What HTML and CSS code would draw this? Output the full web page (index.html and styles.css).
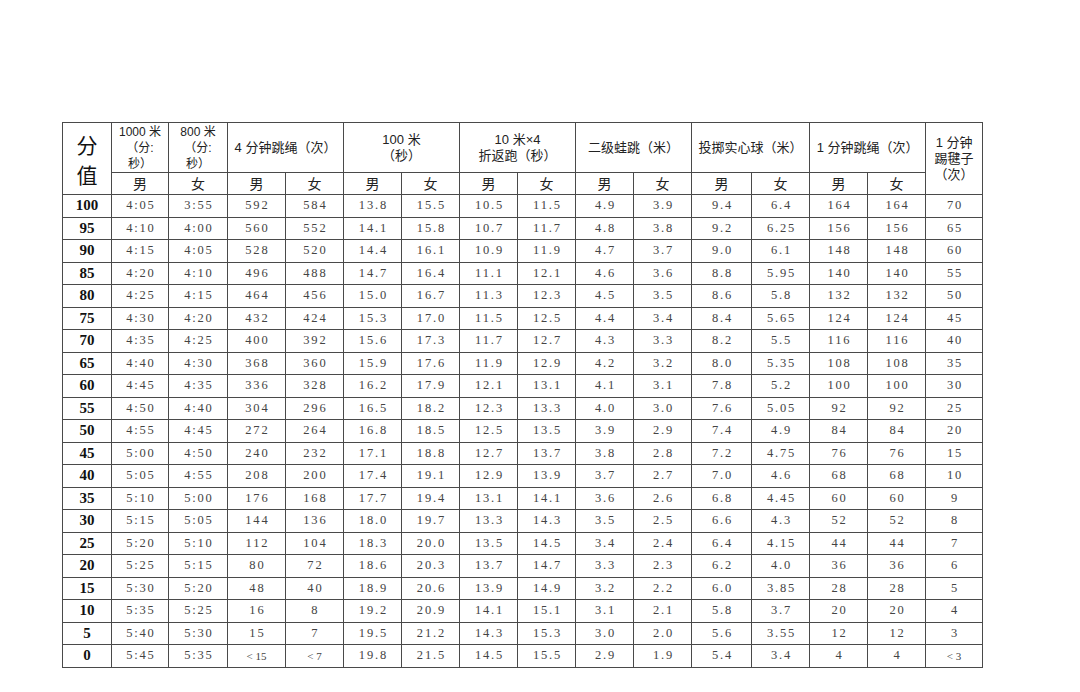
FILE: index.html
```html
<!DOCTYPE html>
<html lang="zh">
<head>
<meta charset="utf-8">
<link rel="stylesheet" href="styles.css">
</head>
<body>
<div class="page">
<table class="score">
<colgroup>
<col class="c-s"><col class="c-a"><col class="c-b">
<col class="c"><col class="c"><col class="c"><col class="c"><col class="c"><col class="c"><col class="c"><col class="c"><col class="c-w"><col class="c"><col class="c"><col class="c"><col class="c-e">
</colgroup>
<thead>
<tr class="h1">
<th rowspan="2" class="big">分<br>值</th>
<th class="small">1000 米<br>（分:<br>秒）</th>
<th class="small">800 米<br>（分:<br>秒）</th>
<th colspan="2">4 分钟跳绳（次）</th>
<th colspan="2">100 米<br>（秒）</th>
<th colspan="2">10 米×4<br>折返跑（秒）</th>
<th colspan="2">二级蛙跳（米）</th>
<th colspan="2">投掷实心球（米）</th>
<th colspan="2">1 分钟跳绳（次）</th>
<th rowspan="2" class="last">1 分钟<br>踢毽子<br>（次）</th>
</tr>
<tr class="h2">
<th>男</th><th>女</th><th>男</th><th>女</th><th>男</th><th>女</th><th>男</th><th>女</th><th>男</th><th>女</th><th>男</th><th>女</th><th>男</th><th>女</th>
</tr>
</thead>
<tbody>
<tr><th>100</th><td>4:05</td><td>3:55</td><td>592</td><td>584</td><td>13.8</td><td>15.5</td><td>10.5</td><td>11.5</td><td>4.9</td><td>3.9</td><td>9.4</td><td>6.4</td><td>164</td><td>164</td><td>70</td></tr>
<tr><th>95</th><td>4:10</td><td>4:00</td><td>560</td><td>552</td><td>14.1</td><td>15.8</td><td>10.7</td><td>11.7</td><td>4.8</td><td>3.8</td><td>9.2</td><td>6.25</td><td>156</td><td>156</td><td>65</td></tr>
<tr><th>90</th><td>4:15</td><td>4:05</td><td>528</td><td>520</td><td>14.4</td><td>16.1</td><td>10.9</td><td>11.9</td><td>4.7</td><td>3.7</td><td>9.0</td><td>6.1</td><td>148</td><td>148</td><td>60</td></tr>
<tr><th>85</th><td>4:20</td><td>4:10</td><td>496</td><td>488</td><td>14.7</td><td>16.4</td><td>11.1</td><td>12.1</td><td>4.6</td><td>3.6</td><td>8.8</td><td>5.95</td><td>140</td><td>140</td><td>55</td></tr>
<tr><th>80</th><td>4:25</td><td>4:15</td><td>464</td><td>456</td><td>15.0</td><td>16.7</td><td>11.3</td><td>12.3</td><td>4.5</td><td>3.5</td><td>8.6</td><td>5.8</td><td>132</td><td>132</td><td>50</td></tr>
<tr><th>75</th><td>4:30</td><td>4:20</td><td>432</td><td>424</td><td>15.3</td><td>17.0</td><td>11.5</td><td>12.5</td><td>4.4</td><td>3.4</td><td>8.4</td><td>5.65</td><td>124</td><td>124</td><td>45</td></tr>
<tr><th>70</th><td>4:35</td><td>4:25</td><td>400</td><td>392</td><td>15.6</td><td>17.3</td><td>11.7</td><td>12.7</td><td>4.3</td><td>3.3</td><td>8.2</td><td>5.5</td><td>116</td><td>116</td><td>40</td></tr>
<tr><th>65</th><td>4:40</td><td>4:30</td><td>368</td><td>360</td><td>15.9</td><td>17.6</td><td>11.9</td><td>12.9</td><td>4.2</td><td>3.2</td><td>8.0</td><td>5.35</td><td>108</td><td>108</td><td>35</td></tr>
<tr><th>60</th><td>4:45</td><td>4:35</td><td>336</td><td>328</td><td>16.2</td><td>17.9</td><td>12.1</td><td>13.1</td><td>4.1</td><td>3.1</td><td>7.8</td><td>5.2</td><td>100</td><td>100</td><td>30</td></tr>
<tr><th>55</th><td>4:50</td><td>4:40</td><td>304</td><td>296</td><td>16.5</td><td>18.2</td><td>12.3</td><td>13.3</td><td>4.0</td><td>3.0</td><td>7.6</td><td>5.05</td><td>92</td><td>92</td><td>25</td></tr>
<tr><th>50</th><td>4:55</td><td>4:45</td><td>272</td><td>264</td><td>16.8</td><td>18.5</td><td>12.5</td><td>13.5</td><td>3.9</td><td>2.9</td><td>7.4</td><td>4.9</td><td>84</td><td>84</td><td>20</td></tr>
<tr><th>45</th><td>5:00</td><td>4:50</td><td>240</td><td>232</td><td>17.1</td><td>18.8</td><td>12.7</td><td>13.7</td><td>3.8</td><td>2.8</td><td>7.2</td><td>4.75</td><td>76</td><td>76</td><td>15</td></tr>
<tr><th>40</th><td>5:05</td><td>4:55</td><td>208</td><td>200</td><td>17.4</td><td>19.1</td><td>12.9</td><td>13.9</td><td>3.7</td><td>2.7</td><td>7.0</td><td>4.6</td><td>68</td><td>68</td><td>10</td></tr>
<tr><th>35</th><td>5:10</td><td>5:00</td><td>176</td><td>168</td><td>17.7</td><td>19.4</td><td>13.1</td><td>14.1</td><td>3.6</td><td>2.6</td><td>6.8</td><td>4.45</td><td>60</td><td>60</td><td>9</td></tr>
<tr><th>30</th><td>5:15</td><td>5:05</td><td>144</td><td>136</td><td>18.0</td><td>19.7</td><td>13.3</td><td>14.3</td><td>3.5</td><td>2.5</td><td>6.6</td><td>4.3</td><td>52</td><td>52</td><td>8</td></tr>
<tr><th>25</th><td>5:20</td><td>5:10</td><td>112</td><td>104</td><td>18.3</td><td>20.0</td><td>13.5</td><td>14.5</td><td>3.4</td><td>2.4</td><td>6.4</td><td>4.15</td><td>44</td><td>44</td><td>7</td></tr>
<tr><th>20</th><td>5:25</td><td>5:15</td><td>80</td><td>72</td><td>18.6</td><td>20.3</td><td>13.7</td><td>14.7</td><td>3.3</td><td>2.3</td><td>6.2</td><td>4.0</td><td>36</td><td>36</td><td>6</td></tr>
<tr><th>15</th><td>5:30</td><td>5:20</td><td>48</td><td>40</td><td>18.9</td><td>20.6</td><td>13.9</td><td>14.9</td><td>3.2</td><td>2.2</td><td>6.0</td><td>3.85</td><td>28</td><td>28</td><td>5</td></tr>
<tr><th>10</th><td>5:35</td><td>5:25</td><td>16</td><td>8</td><td>19.2</td><td>20.9</td><td>14.1</td><td>15.1</td><td>3.1</td><td>2.1</td><td>5.8</td><td>3.7</td><td>20</td><td>20</td><td>4</td></tr>
<tr><th>5</th><td>5:40</td><td>5:30</td><td>15</td><td>7</td><td>19.5</td><td>21.2</td><td>14.3</td><td>15.3</td><td>3.0</td><td>2.0</td><td>5.6</td><td>3.55</td><td>12</td><td>12</td><td>3</td></tr>
<tr><th>0</th><td>5:45</td><td>5:35</td><td class="lt">&lt; 15</td><td class="lt">&lt; 7</td><td>19.8</td><td>21.5</td><td>14.5</td><td>15.5</td><td>2.9</td><td>1.9</td><td>5.4</td><td>3.4</td><td>4</td><td>4</td><td class="lt">&lt; 3</td></tr>
</tbody>
</table>
</div>
</body>
</html>
```
FILE: styles.css
```css
html, body {
  margin: 0;
  padding: 0;
  background: #ffffff;
}
.page {
  padding: 122px 0 0 62px;
}
.score {
  border-collapse: collapse;
  table-layout: fixed;
  width: 920px;
  color: #333;
}
.c-s { width: 49px; }
.c-a { width: 57px; }
.c-b { width: 59px; }
.c { width: 58px; }
.c-w { width: 60px; }
.c-e { width: 57px; }
.score th, .score td {
  border: 1px solid #4a4a4a;
  padding: 0;
  text-align: center;
  vertical-align: middle;
  overflow: hidden;
}
.score thead th {
  font-family: "Liberation Sans", "Noto Sans CJK SC", sans-serif;
  font-weight: normal;
  font-size: 13px;
  color: #222;
  line-height: 16px;
}
.score .h1 { height: 50px; }
.score .h2 { height: 22px; }
.score .h2 th { font-size: 14px; }
.score thead th.small { font-size: 12px; line-height: 16px; }
.score thead th.big {
  font-family: "Noto Sans CJK SC", sans-serif;
  font-size: 21px;
  line-height: 30px;
  font-weight: normal;
  color: #111;
}
.score thead th.last { font-size: 13px; line-height: 16px; }
.score tbody tr { height: 22.5px; }
.score tbody th {
  font-family: "Liberation Serif", "DejaVu Serif", serif;
  font-weight: bold;
  font-size: 15px;
  color: #111;
}
.score tbody td {
  font-family: "Liberation Serif", "DejaVu Serif", serif;
  font-size: 12.5px;
  letter-spacing: 1.8px;
  text-indent: 1.8px;
  color: #444;
}
.score tbody td.lt { font-size: 11px; letter-spacing: 0; text-indent: 0; }
```
